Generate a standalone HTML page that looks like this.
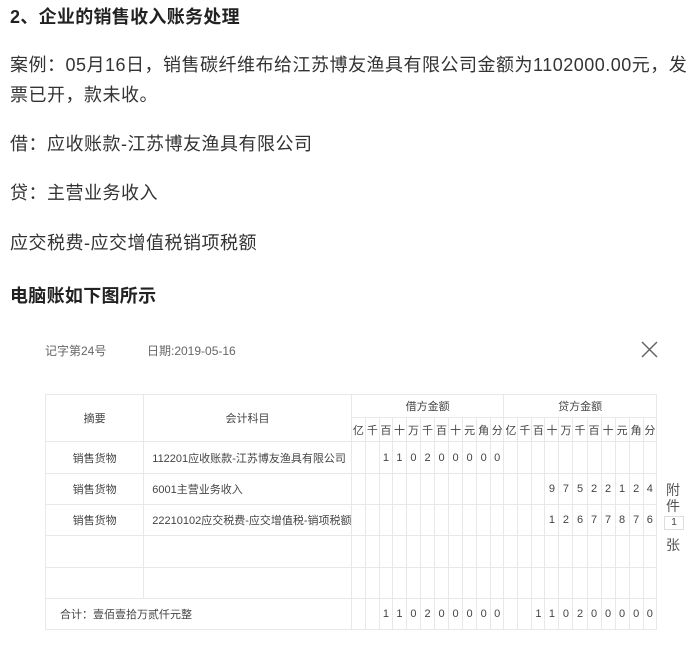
<!DOCTYPE html>
<html><head><meta charset="utf-8"><style>
body{margin:0;background:#fff;font-family:"Liberation Sans","Noto Sans CJK SC",sans-serif;color:#333;width:699px;height:664px;overflow:hidden;position:relative}
.p{position:absolute;left:10px;font-size:18px;line-height:30px;color:#333;white-space:nowrap;letter-spacing:0.5px}
.h{font-weight:bold;color:#222;letter-spacing:0.3px}
.tb{position:absolute;font-size:12px;color:#666}
table{position:absolute;left:45px;top:394px;border-collapse:collapse;table-layout:fixed;width:612px;font-size:11px;color:#444}
td{border:1px solid #e8e8e8;padding:0;text-align:center;overflow:hidden;white-space:nowrap}
td.b{border-left:1px solid #bfe0f5}
td.r{border-left:1px solid #f5c6c6}
.l{text-align:left;padding-left:8px}
.side{position:absolute;left:666px;font-size:14px;color:#555}
</style></head><body>
<div class="p h" style="top:2px">2、企业的销售收入账务处理</div>
<div class="p" style="top:50px">案例：05月16日，销售碳纤维布给江苏博友渔具有限公司金额为1102000.00元，发</div>
<div class="p" style="top:80px">票已开，款未收。</div>
<div class="p" style="top:129px">借：应收账款-江苏博友渔具有限公司</div>
<div class="p" style="top:178px">贷：主营业务收入</div>
<div class="p" style="top:228px">应交税费-应交增值税销项税额</div>
<div class="p h" style="top:281px">电脑账如下图所示</div>
<div class="tb" style="left:45px;top:342px">记字第24号</div>
<div class="tb" style="left:147px;top:342px">日期:2019-05-16</div>
<svg style="position:absolute;left:641px;top:341px" width="17" height="17"><path d="M1 1L16 16M16 1L1 16" stroke="#666" stroke-width="1.5"/></svg>
<table>
<colgroup><col style="width:98px"><col style="width:207px">
<col style="width:14px"><col style="width:14px"><col style="width:13px"><col style="width:14px"><col style="width:14px"><col style="width:14px"><col style="width:14px"><col style="width:14px"><col style="width:14px"><col style="width:14px"><col style="width:13px">
<col style="width:14px"><col style="width:14px"><col style="width:13px"><col style="width:14px"><col style="width:14px"><col style="width:14px"><col style="width:14px"><col style="width:14px"><col style="width:14px"><col style="width:14px"><col style="width:13px">
</colgroup>
<tr style="height:23px"><td rowspan="2">摘要</td><td rowspan="2">会计科目</td><td colspan="11">借方金额</td><td colspan="11">贷方金额</td></tr>
<tr style="height:24px"><td>亿</td><td>千</td><td>百</td><td class="b">十</td><td>万</td><td>千</td><td class="b">百</td><td>十</td><td>元</td><td class="r">角</td><td>分</td><td>亿</td><td>千</td><td>百</td><td class="b">十</td><td>万</td><td>千</td><td class="b">百</td><td>十</td><td>元</td><td class="r">角</td><td>分</td></tr>
<tr style="height:32px"><td>销售货物</td><td class="l">112201应收账款-江苏博友渔具有限公司</td><td></td><td></td><td>1</td><td class="b">1</td><td>0</td><td>2</td><td class="b">0</td><td>0</td><td>0</td><td class="r">0</td><td>0</td><td></td><td></td><td></td><td class="b"></td><td></td><td></td><td class="b"></td><td></td><td></td><td class="r"></td><td></td></tr>
<tr style="height:31px"><td>销售货物</td><td class="l">6001主营业务收入</td><td></td><td></td><td></td><td class="b"></td><td></td><td></td><td class="b"></td><td></td><td></td><td class="r"></td><td></td><td></td><td></td><td></td><td class="b">9</td><td>7</td><td>5</td><td class="b">2</td><td>2</td><td>1</td><td class="r">2</td><td>4</td></tr>
<tr style="height:31px"><td>销售货物</td><td class="l">22210102应交税费-应交增值税-销项税额</td><td></td><td></td><td></td><td class="b"></td><td></td><td></td><td class="b"></td><td></td><td></td><td class="r"></td><td></td><td></td><td></td><td></td><td class="b">1</td><td>2</td><td>6</td><td class="b">7</td><td>7</td><td>8</td><td class="r">7</td><td>6</td></tr>
<tr style="height:32px"><td></td><td></td><td></td><td></td><td></td><td class="b"></td><td></td><td></td><td class="b"></td><td></td><td></td><td class="r"></td><td></td><td></td><td></td><td></td><td class="b"></td><td></td><td></td><td class="b"></td><td></td><td></td><td class="r"></td><td></td></tr>
<tr style="height:31px"><td></td><td></td><td></td><td></td><td></td><td class="b"></td><td></td><td></td><td class="b"></td><td></td><td></td><td class="r"></td><td></td><td></td><td></td><td></td><td class="b"></td><td></td><td></td><td class="b"></td><td></td><td></td><td class="r"></td><td></td></tr>
<tr style="height:31px"><td colspan="2" class="l" style="padding-left:14px">合计：壹佰壹拾万贰仟元整</td><td></td><td></td><td>1</td><td class="b">1</td><td>0</td><td>2</td><td class="b">0</td><td>0</td><td>0</td><td class="r">0</td><td>0</td><td></td><td></td><td>1</td><td class="b">1</td><td>0</td><td>2</td><td class="b">0</td><td>0</td><td>0</td><td class="r">0</td><td>0</td></tr>
</table>
<div class="side" style="top:480px">附</div>
<div class="side" style="top:496px">件</div>
<div style="position:absolute;left:664px;top:516px;width:18px;height:12px;border:1px solid #ddd;font-size:10px;text-align:center;line-height:12px;color:#444">1</div>
<div class="side" style="top:535px">张</div>
</body></html>
